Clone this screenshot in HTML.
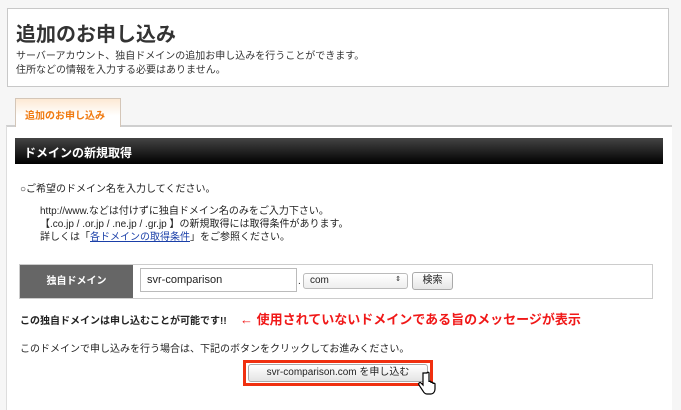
<!DOCTYPE html>
<html><head><meta charset="utf-8"><style>
*{margin:0;padding:0;box-sizing:border-box}
body{width:681px;height:410px;background:#fff;font-family:"Liberation Sans","Noto Sans CJK JP",sans-serif;color:#222;position:relative;overflow:hidden}
.a{position:absolute;white-space:nowrap}
</style></head><body>
<div class="a" style="left:0;top:0;width:681px;height:410px;background:#f6f6f6"></div>
<div class="a" style="left:7px;top:8px;width:662px;height:79px;background:#fff;border:1px solid #c8c8c8"></div>
<div class="a" style="left:16px;top:18px;font-size:20px;font-weight:bold;color:#333">追加のお申し込み</div>
<div class="a" style="left:16px;top:50px;font-size:10px;line-height:14px;color:#333">サーバーアカウント、独自ドメインの追加お申し込みを行うことができます。<br>住所などの情報を入力する必要はありません。</div>
<div class="a" style="left:6px;top:125px;width:666px;height:285px;background:#fff;border-top:2px solid #cfcfcf;border-left:1px solid #ddd"></div>
<div class="a" style="left:15px;top:98px;width:106px;height:29px;background:linear-gradient(#fde9d4,#fff 60%);border:1px solid #d4c6b8;border-bottom:none;color:#f07a10;font-size:10px;font-weight:bold;padding:8px 0 0 9px">追加のお申し込み</div>
<div class="a" style="left:15px;top:138px;width:648px;height:26px;background:linear-gradient(#444,#000);color:#fff;font-size:12px;font-weight:bold;padding:6px 0 0 9px">ドメインの新規取得</div>
<div class="a" style="left:20px;top:180px;font-size:10px">○ご希望のドメイン名を入力してください。</div>
<div class="a" style="left:40px;top:205px;font-size:10px;line-height:13px">http://www.などは付けずに独自ドメイン名のみをご入力下さい。<br>【.co.jp / .or.jp / .ne.jp / .gr.jp 】の新規取得には取得条件があります。<br>詳しくは「<span style="color:#1a3fa8;text-decoration:underline">各ドメインの取得条件</span>」をご参照ください。</div>
<div class="a" style="left:19px;top:264px;width:634px;height:35px;border:1px solid #ccc;background:#fff"></div>
<div class="a" style="left:20px;top:265px;width:113px;height:33px;background:#666;color:#fff;font-size:10px;font-weight:bold;text-align:center;line-height:33px">独自ドメイン</div>
<div class="a" style="left:140px;top:268px;width:157px;height:24px;border:1px solid #bbb;font-size:11px;padding:5px 0 0 6px">svr-comparison</div>
<div class="a" style="left:298px;top:276px;font-size:10px">.</div>
<div class="a" style="left:303px;top:273px;width:105px;height:16px;border:1px solid #bbb;border-radius:3px;background:linear-gradient(#fff,#eee);font-size:10px;padding:1px 0 0 6px">com<span style="position:absolute;right:6px;top:1px;font-size:7px">⇕</span></div>
<div class="a" style="left:412px;top:272px;width:41px;height:18px;border:1px solid #aaa;border-radius:3px;background:linear-gradient(#fff,#e6e6e6);font-size:10px;text-align:center;line-height:16px">検索</div>
<div class="a" style="left:20px;top:312px;font-size:10px;font-weight:bold">この独自ドメインは申し込むことが可能です!!</div>
<div class="a" style="left:240px;top:309px;font-size:13px;font-weight:bold;color:#f01818">← 使用されていないドメインである旨のメッセージが表示</div>
<div class="a" style="left:20px;top:340px;font-size:10px">このドメインで申し込みを行う場合は、下記のボタンをクリックしてお進みください。</div>
<div class="a" style="left:243px;top:360px;width:190px;height:26px;border:3px solid #f03010;background:#fff"></div>
<div class="a" style="left:248px;top:364px;width:180px;height:18px;border:1px solid #aaa;border-radius:3px;background:linear-gradient(#fff,#e4e4e4);font-size:10px;text-align:center;line-height:16px">svr-comparison.com を申し込む</div>
<svg class="a" style="left:417px;top:371px" width="20" height="26" viewBox="0 0 20 26"><path d="M6 2v12l-2-2c-1-1-3 0-2 2l4 6c1 2 2 3 4 3h4c2 0 4-2 4-5v-5c0-1-2-1-2 0v-1c0-1-2-1-2 0v-1c0-1-2-1-2 0V2c0-1-2-1-2 0z" fill="#fff" stroke="#000" stroke-width="1.2"/></svg>
</body></html>
